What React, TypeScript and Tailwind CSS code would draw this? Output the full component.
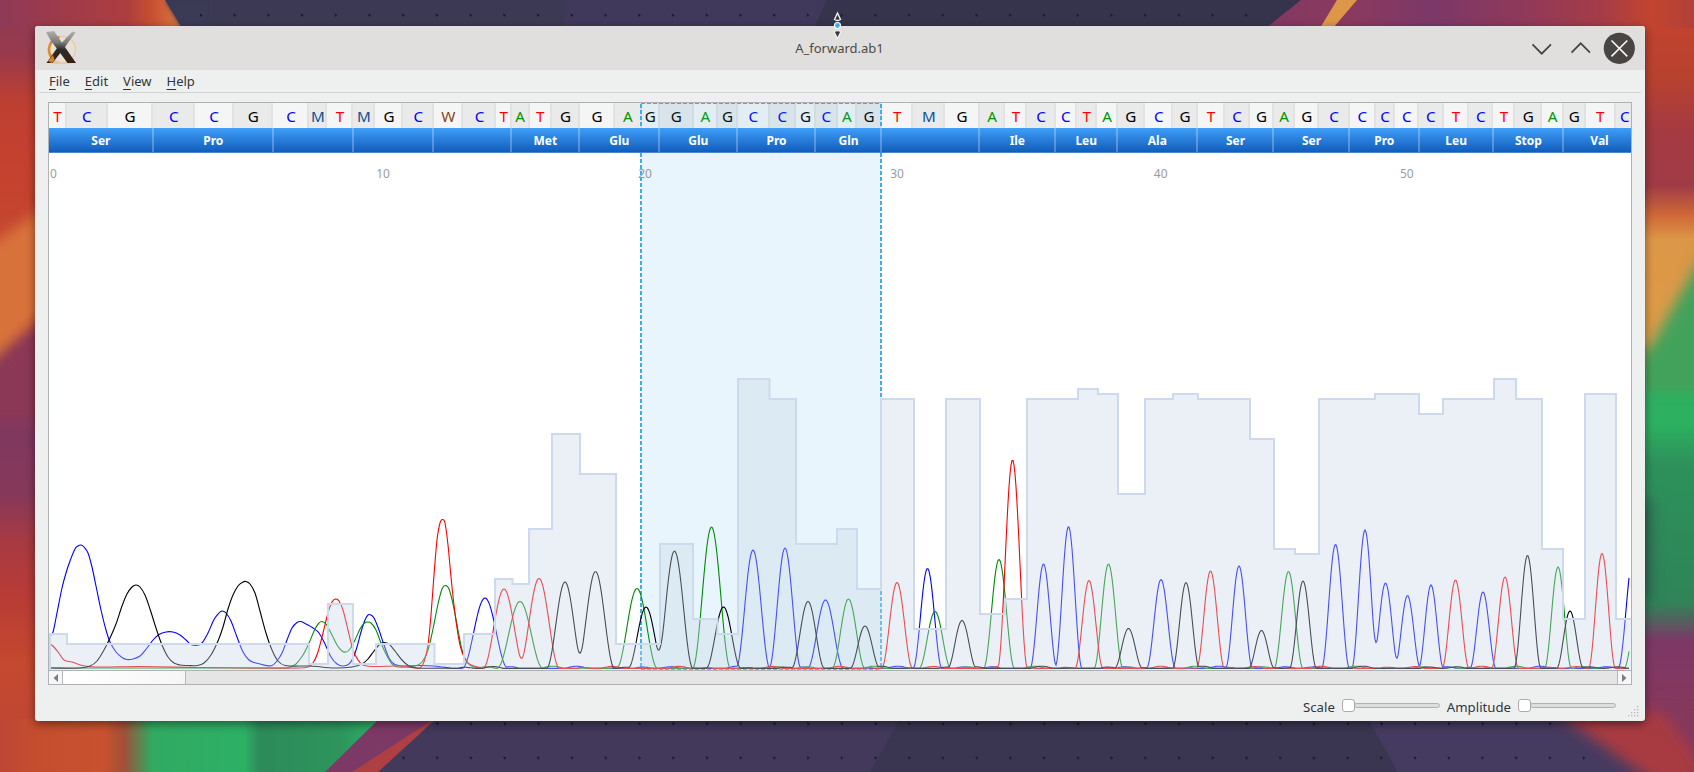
import React from "react";

const LEFT = 49;
const BASE_Y = 668.4;

const SEQ = "TCGCCGCMTMGCWCTATGGAGGAGCCGCAGTMGATCCTAGCGTCGAGCCCCCTCTGAGTC";

const EDGES = [
  49, 67, 107.6, 153.5, 195, 234, 273.5, 309.5, 327.5, 353.5, 375.5, 403.5, 434, 463.5, 496.5, 511.8, 529.6, 552,
  580, 615, 641.8, 659.6, 694, 718, 738, 769.6, 796, 816.2, 837.6, 857.3, 882, 913.6, 945.6, 979.8, 1005.6, 1027.6,
  1055.7, 1077, 1097.6, 1117.8, 1145.2, 1173.6, 1198, 1225.5, 1250, 1274.2, 1295.6, 1319.6, 1350, 1375.8, 1395.6,
  1419.5, 1443.8, 1469.6, 1493.7, 1515.6, 1542.6, 1564.2, 1586, 1616.2, 1635,
];

const BASE_COLOR: Record<string, string> = {
  T: "text-[#ff0000]",
  C: "text-[#0000ff]",
  G: "text-black",
  A: "text-[#009600]",
  M: "text-[#0b4f91]",
  W: "text-[#8b4513]",
};

const AMINO: [string, number][] = [
  ["Ser", 153.8], ["Pro", 273.8], ["", 353.8], ["", 434], ["", 511.8], ["Met", 580], ["Glu", 659.8], ["Glu", 738],
  ["Pro", 816.2], ["Gln", 882], ["", 980], ["Ile", 1055.8], ["Leu", 1117.8], ["Ala", 1198], ["Ser", 1274.2],
  ["Ser", 1350], ["Pro", 1419.8], ["Leu", 1493.8], ["Stop", 1564.2], ["Val", 1636],
];

// [right edge, top] of every step of the quality graph
const QUALITY: [number, number][] = [
  [67, 634], [309, 644], [328, 664], [353, 604], [376, 664], [434.5, 644], [464, 664], [495, 634], [512.5, 579],
  [529, 584], [552, 529], [580, 434], [616, 474], [660, 644], [693, 544], [717.5, 619], [738, 634], [769.5, 379],
  [796, 399], [837, 544], [857, 529], [881, 589], [914, 399], [946, 629], [980, 399], [1005, 614], [1027, 599],
  [1078, 399], [1098, 389], [1118, 394], [1145, 494], [1173, 399], [1198, 394], [1250, 399], [1274, 439],
  [1295, 549], [1319, 554], [1375, 399], [1419, 394], [1443, 414], [1494, 399], [1516, 379], [1542, 399],
  [1563, 549], [1585, 619], [1616, 394], [1640, 619],
];

const BLUE_HEAD: [number, number][] = [
  [50, 636], [53, 632], [56, 618], [62, 588], [66, 573], [70, 561], [75, 549], [78, 546], [81, 545], [84, 547],
  [88, 553], [92, 567], [96, 586], [101, 610], [106, 630], [110, 642], [116, 652], [122, 657.5], [127, 659.5],
  [133, 659], [140, 656], [147, 648], [153, 640], [159, 634.5], [166, 632], [173, 632], [180, 635], [186, 640],
  [191, 644.5], [196, 645.5], [202, 643], [208, 633], [214, 619.5], [219, 613], [222, 611], [226, 613], [231, 621],
  [237, 637], [243, 652], [249, 660], [254, 662.5], [260, 664], [266, 665.5], [272, 665.5], [277, 661], [282, 653],
  [287, 640], [292, 628], [297, 622.5], [301, 621.5], [306, 624], [313, 628], [319, 633], [325, 644], [331, 657],
  [337, 664], [343, 666], [349, 664], [353, 658], [357, 647], [361, 632], [365, 620], [368, 615], [371, 615],
  [374, 618], [379, 630], [384, 645], [389, 658], [394, 664], [402, 666], [420, 665.5], [434, 666], [450, 668],
];
const BLACK_HEAD: [number, number][] = [
  [50, 668], [80, 668], [90, 666], [97, 661], [104, 650], [110, 638], [116, 624], [122, 606], [127, 594], [132, 587],
  [136, 585], [140, 587], [145, 595], [150, 609], [156, 628], [162, 645], [168, 657], [174, 663], [180, 665],
  [188, 665.5], [197, 665.5], [204, 663], [211, 655], [218, 641], [223, 627], [228, 609], [233, 595], [238, 586],
  [243, 582], [246, 581.5], [250, 584], [255, 593], [260, 611], [266, 633], [272, 650], [278, 661], [285, 665.5],
  [310, 666], [335, 668], [352, 667], [362, 664], [368, 659], [374, 651], [380, 644], [384, 642.5], [389, 644],
  [395, 651], [402, 660], [409, 666], [418, 668], [450, 668],
];
const RED_HEAD: [number, number][] = [
  [50, 644], [53, 646], [58, 652], [64, 660], [72, 662], [82, 665.5], [95, 667], [140, 666.5], [200, 667.5],
  [250, 668], [300, 668], [308, 667], [313, 663], [318, 652], [323, 633], [328, 613], [332, 602], [335.5, 599],
  [339, 601], [343, 610], [348, 630], [353, 650], [358, 660], [363, 665], [372, 666.5], [400, 666], [415, 668],
  [420, 668], [424, 662], [428, 645], [431, 615], [434, 575], [437, 540], [440, 523], [442.5, 519.5], [445, 523],
  [448, 545], [451, 577], [454, 605], [457, 628], [460, 645], [464, 657], [468, 663], [474, 666], [480, 667.5],
];
const GREEN_HEAD: [number, number][] = [
  [50, 668], [200, 668], [285, 668], [290, 667], [296, 664], [303, 655], [309, 643], [315, 629], [319, 623],
  [322, 621.5], [326, 624], [332, 635], [337, 645], [342, 651], [346, 652], [350, 649], [355, 640], [360, 629],
  [364, 623.5], [367, 622], [371, 623], [376, 630], [381, 643], [387, 656], [392, 664], [398, 667], [415, 666],
  [422, 662], [428, 650], [433, 629], [438, 604], [442, 589], [445.5, 585.5], [449, 589], [453, 604], [458, 630],
  [462, 650], [467, 662], [473, 667], [480, 668],
];

// [centre, top, half width at the base]
type Peak = [number, number, number];

const BLUE_PEAKS: Peak[] = [
  [485, 598, 23], [753, 550, 17], [785, 548, 16], [825.5, 600, 18], [927.5, 568.5, 14.5], [1043.5, 564, 13.5],
  [1068.5, 526.5, 13.5], [1161, 579.5, 14.5], [1239, 566, 13.5], [1335.5, 544.5, 14], [1365, 530, 13.3],
  [1385.5, 583, 13.3], [1407.5, 595.5, 13], [1431, 585, 12.5], [1483, 592, 13], [1634, 552, 16],
];
const BLACK_PEAKS: Peak[] = [
  [565, 582, 18.5], [595.5, 571.5, 19], [646, 607, 18], [674.5, 551, 18.5], [723.5, 607, 17.5], [808, 601.5, 16.5],
  [865, 626, 15], [962, 620.5, 14.5], [1128.5, 628.5, 14], [1186, 582.5, 13.5], [1261.5, 630.5, 13], [1303, 581, 13.5],
  [1527.5, 555.5, 13.5], [1570, 611, 13.5],
];
const RED_PEAKS: Peak[] = [
  [504, 589, 21], [539, 578.5, 20.5], [897, 582.5, 15.5], [1012.5, 460, 15], [1089, 580.5, 14], [1210.5, 571, 14],
  [1455.5, 580, 13.5], [1505, 577, 13.5], [1602, 553.5, 13.5],
];
const GREEN_PEAKS: Peak[] = [
  [520, 601.5, 23], [637, 588.5, 20.5], [711.5, 527, 19], [848.5, 599, 16.5], [935, 611.5, 16], [999, 559.5, 15.5],
  [1108.5, 564, 14.5], [1288.5, 571.5, 14.5], [1558, 567, 13.5], [1638, 608, 14],
];

function tracePath(head: [number, number][], peaks: Peak[], phase: number) {
  let d = `M${head[0][0]} ${head[0][1]}`;
  for (let i = 0; i < head.length - 1; i++) {
    const p0 = head[Math.max(0, i - 1)];
    const p1 = head[i];
    const p2 = head[i + 1];
    const p3 = head[Math.min(head.length - 1, i + 2)];
    const slope = (a: number[], b: number[]) => (b[1] - a[1]) / (b[0] - a[0] || 1);
    const dx = (p2[0] - p1[0]) / 3;
    const y1 = p1[1] + slope(p0, p2) * dx;
    const y2 = p2[1] - slope(p1, p3) * dx;
    d += `C${p1[0] + dx} ${y1.toFixed(1)} ${p2[0] - dx} ${y2.toFixed(1)} ${p2[0]} ${p2[1]}`;
  }
  for (let x = head[head.length - 1][0] + 1; x <= 1629; x += 1) {
    let h = 0;
    for (const [c, top, w] of peaks) {
      const t = Math.abs(x - c) / w;
      if (t < 1) h += (BASE_Y - top) * Math.cos((t * Math.PI) / 2) ** 2;
    }
    const ripple = Math.max(0, Math.sin(x / 7.3 + phase) * Math.sin(x / 17.1 + phase * 2.3)) * 2.2;
    d += `L${x} ${(BASE_Y - Math.max(h, ripple)).toFixed(1)}`;
  }
  return d;
}

const TRACES = [
  { stroke: "#0000ff", d: tracePath(BLUE_HEAD, BLUE_PEAKS, 1.1) },
  { stroke: "#008a0a", d: tracePath(GREEN_HEAD, GREEN_PEAKS, 4.4) },
  { stroke: "#fa0000", d: tracePath(RED_HEAD, RED_PEAKS, 2.7) },
  { stroke: "#000000", d: tracePath(BLACK_HEAD, BLACK_PEAKS, 0.2) },
];

function qualityLine() {
  let d = "M50 672";
  let x = 50;
  for (const [right, top] of QUALITY) {
    d += `L${x} ${top}L${right} ${top}`;
    x = right;
  }
  return d + "L1640 672Z";
}

function Wallpaper() {
  const dots: [number, number][] = [];
  for (let i = 0; i < 32; i++) dots.push([201 + i * 33.72, 15]);
  for (let i = 0; i < 34; i++) dots.push([437.5 + i * 33.72, 723.5]);
  for (let i = 0; i < 36; i++) dots.push([403.6 + i * 33.72, 757.7]);
  return (
    <svg className="absolute inset-0" width="1694" height="772" viewBox="0 0 1694 772">
      <defs>
        <filter id="soft" x="-80" y="-80" width="1900" height="950" filterUnits="userSpaceOnUse"><feGaussianBlur stdDeviation="7" /></filter>
        <filter id="edge" x="-30%" y="-30%" width="160%" height="160%"><feGaussianBlur stdDeviation="2" /></filter>
        <linearGradient id="left" x1="0" y1="0" x2="0" y2="772" gradientUnits="userSpaceOnUse">
          <stop offset="0" stopColor="#8e3a55" /><stop offset="0.07" stopColor="#983a4c" />
          <stop offset="0.13" stopColor="#bd3f32" /><stop offset="0.2" stopColor="#c4412f" />
          <stop offset="0.38" stopColor="#c64a2f" /><stop offset="0.44" stopColor="#933a50" />
          <stop offset="0.56" stopColor="#80385f" /><stop offset="0.64" stopColor="#86385a" />
          <stop offset="0.7" stopColor="#a73a42" /><stop offset="0.77" stopColor="#b83b36" />
          <stop offset="0.86" stopColor="#c5482f" /><stop offset="1" stopColor="#bd4636" />
        </linearGradient>
        <linearGradient id="right" x1="1670" y1="0" x2="1670" y2="772" gradientUnits="userSpaceOnUse">
          <stop offset="0" stopColor="#c6422f" /><stop offset="0.1" stopColor="#b8422f" />
          <stop offset="0.17" stopColor="#a53a42" /><stop offset="0.24" stopColor="#a03b46" />
          <stop offset="0.28" stopColor="#cf6a38" /><stop offset="0.31" stopColor="#dc9647" />
          <stop offset="0.44" stopColor="#dd9c48" /><stop offset="0.48" stopColor="#5aa057" />
          <stop offset="0.51" stopColor="#2db060" /><stop offset="0.55" stopColor="#2db060" />
          <stop offset="0.6" stopColor="#2d915b" /><stop offset="0.78" stopColor="#2f8458" />
          <stop offset="0.83" stopColor="#7d3867" /><stop offset="0.9" stopColor="#84385f" />
          <stop offset="1" stopColor="#983a4e" />
        </linearGradient>
        <linearGradient id="top" x1="0" y1="0" x2="170" y2="0" gradientUnits="userSpaceOnUse">
          <stop offset="0" stopColor="#8f3a57" /><stop offset="0.3" stopColor="#9c3a4c" />
          <stop offset="0.75" stopColor="#ad3e40" /><stop offset="0.88" stopColor="#c54e30" />
          <stop offset="1" stopColor="#d2683a" />
        </linearGradient>
        <linearGradient id="topr" x1="1270" y1="0" x2="1694" y2="0" gradientUnits="userSpaceOnUse">
          <stop offset="0" stopColor="#833862" /><stop offset="0.2" stopColor="#8b3a5e" />
          <stop offset="0.38" stopColor="#7b3868" /><stop offset="0.6" stopColor="#90395a" />
          <stop offset="0.78" stopColor="#a53c48" /><stop offset="0.9" stopColor="#c3442f" />
          <stop offset="1" stopColor="#b04038" />
        </linearGradient>
        <linearGradient id="bottom" x1="0" y1="0" x2="400" y2="0" gradientUnits="userSpaceOnUse">
          <stop offset="0" stopColor="#bd4636" /><stop offset="0.1" stopColor="#c54e2f" />
          <stop offset="0.26" stopColor="#c8522f" /><stop offset="0.31" stopColor="#a05038" />
          <stop offset="0.38" stopColor="#31aa62" /><stop offset="0.61" stopColor="#2db065" />
          <stop offset="0.65" stopColor="#2d8a5a" /><stop offset="0.85" stopColor="#2d955c" />
          <stop offset="0.95" stopColor="#2fae66" />
        </linearGradient>
      </defs>
      <rect width="1694" height="772" fill="#3b3953" />
      <rect width="60" height="772" fill="url(#left)" />
      <path d="M-30 258L60 198V300L-30 385Z" fill="#d8723a" filter="url(#soft)" />
      <path d="M-30 390L60 308V420H-30Z" fill="#8b3956" filter="url(#soft)" />
      <path d="M0 0H165L182 28H0Z" fill="url(#top)" />
      <path d="M165 0L182 28H210V0Z" fill="#3b3a57" filter="url(#edge)" />
      <path d="M565 0H827L815 28H565Z" fill="#41395c" />
      <path d="M827 0H1301L1266 28H814Z" fill="#36344c" />
      <path d="M1301 0H1694V60H1226Z" fill="url(#topr)" />
      <path d="M1337 0H1357L1333 28H1320Z" fill="#de9748" />
      <rect x="1600" y="28" width="94" height="744" fill="url(#right)" />
      <path d="M1720 225V390H1640V365Z" fill="#42a25b" filter="url(#soft)" />
      <path d="M1635 500H1653V600H1635Z" fill="#2f6b54" filter="url(#soft)" />
      <rect y="719" width="470" height="53" fill="url(#bottom)" />
      <path d="M379 719H436L380 772H325Z" fill="#7d3966" />
      <path d="M434 719L352 772H384Z" fill="#ae3f42" />
      <path d="M436 719H1369L1398 772H378Z" fill="#42395b" />
      <path d="M900 719H1369L1398 772H870Z" fill="#3a3651" />
      <path d="M1368 719H1640L1694 772H1398Z" fill="#453b60" />
      <path d="M1555 712H1700V790H1665Z" fill="#a83b42" filter="url(#soft)" />
      <path d="M1655 700H1710V775Z" fill="#84385d" filter="url(#soft)" />
      {dots.map(([x, y], i) => (
        <path key={i} d={`M${x - 1.5} ${y - 1.5}l3 1.5l-2 2z`} fill="#1b1b26" />
      ))}
    </svg>
  );
}

function AppIcon() {
  return (
    <svg width="34" height="34" viewBox="0 0 34 34">
      <defs>
        <linearGradient id="steel" x1="0" y1="0" x2="0" y2="1">
          <stop offset="0" stopColor="#b0b0b0" /><stop offset="0.35" stopColor="#7c7c7c" />
          <stop offset="0.58" stopColor="#2b2a29" /><stop offset="1" stopColor="#38200f" />
        </linearGradient>
      </defs>
      <ellipse cx="18" cy="32" rx="14" ry="1.8" fill="#cfc6b4" />
      <circle cx="18.500" cy="19.500" r="13" fill="#e6e1d6" stroke="#efc9a8" strokeWidth="1.600" />
      <path d="M15.500 7A13 13 0 0 0 8 28" fill="none" stroke="#e08a30" strokeWidth="2.600" />
      <path d="M28.500 1.500L31.500 2.500L19.500 19L8.500 33H2.500L14.500 16Z" fill="url(#steel)" />
      <path d="M2 2L10 1L19.500 15L32 33H23.500L14 20L7 11Z" fill="url(#steel)" />
      <path d="M4 31L9 25L10.500 30L8 33Z" fill="#d9822b" />
    </svg>
  );
}

function TitleBar() {
  return (
    <div className="flex h-[44px] shrink-0 items-center justify-between rounded-t-[3px] bg-[#e0dfdd] pr-[10px] pl-[9px]">
      <div className="flex w-[120px] pb-[2px]">
        <AppIcon />
      </div>
      <div className="pt-px text-[13px] text-[#4d4a48]">A_forward.ab1</div>
      <div className="flex w-[120px] items-center justify-end">
        <svg width="116" height="34" viewBox="1519 30 116 34" fill="none">
          <path d="M1532.500 43.300L1541.700 52.700L1551 43.300M1571.500 51.700L1580.700 42.300L1590 51.700" stroke="#474340" strokeWidth="1.700" />
          <circle cx="1619.300" cy="47.300" r="15.600" fill="#494542" />
          <path d="M1611.500 39.500L1627.300 55.300M1627.300 39.500L1611.500 55.300" stroke="#f4f3f2" strokeWidth="1.700" />
        </svg>
      </div>
    </div>
  );
}

function MenuBar() {
  const items = ["File", "Edit", "View", "Help"];
  return (
    <div className="mx-[4px] flex h-[23px] shrink-0 items-center gap-[15px] border-b border-[#d0d2d3] pt-[2px] pl-[10px] text-[13px] text-[#31363b]">
      {items.map((item) => (
        <span key={item}>
          <span className="underline underline-offset-[3px]">{item[0]}</span>
          {item.slice(1)}
        </span>
      ))}
    </div>
  );
}

function BaseRow() {
  return (
    <div className="relative flex h-[25px] w-[1582px] overflow-hidden">
      {SEQ.split("").map((base, i) => (
        <div
          key={i}
          className={`flex shrink-0 items-center justify-center border-r-2 border-[#e2e2e2] pt-[3px] pl-px text-[15.2px] leading-none ${BASE_COLOR[base]} ${i % 2 ? "bg-[#eaeaea]" : "bg-[#f5f5f5]"}`}
          style={{ width: EDGES[i + 1] - EDGES[i] }}
        >
          {base}
        </div>
      ))}
      <svg className="absolute top-0 left-[591px]" width="243" height="25">
        <rect x="1" width="240" height="25" fill="#3daee9" fillOpacity="0.1" />
        <path d="M1 0.500H241" stroke="#3daee9" strokeDasharray="4 2" />
        <path d="M1 1V25M241 1V25" stroke="#3daee9" strokeWidth="2" strokeDasharray="4 2" />
      </svg>
    </div>
  );
}

function AminoRow() {
  return (
    <div className="flex h-[25px] w-[1582px] overflow-hidden">
      {AMINO.map(([name, right], i) => (
        <div
          key={i}
          className="flex shrink-0 items-center justify-center border-r-2 border-b border-white/25 bg-linear-to-b from-[#3f9ff8] to-[#0f5ab8] bg-origin-border pt-px pl-px text-[12px] leading-none font-bold text-white"
          style={{ width: right - (i ? AMINO[i - 1][1] : LEFT) }}
        >
          {name}
        </div>
      ))}
    </div>
  );
}

function Chromatogram() {
  const ruler: [string, number][] = [["0", 53.5], ["10", 383], ["20", 645], ["30", 897], ["40", 1160.7], ["50", 1406.8]];
  return (
    <svg className="block" width="1582" height="517" viewBox="49 153 1582 517">
      <rect x="49" y="153" width="1582" height="517" fill="#fff" />
      <g fontSize="12" fill="#9b9c9d" textAnchor="middle">
        {ruler.map(([label, x]) => (
          <text key={label} x={x} y="178">{label}</text>
        ))}
      </g>
      <rect x="641" y="153" width="240" height="516" fill="#3aa8e0" fillOpacity="0.11" />
      <path d="M641 153V669M881 153V669" stroke="#3daee9" strokeWidth="2" strokeDasharray="4 2" />
      <path d="M641 669.500H881" stroke="#3daee9" strokeDasharray="4 2" />
      <path d="M49.500 637V669" stroke="#a0306a" />
      <path d="M49.500 637V644" stroke="#0000ee" />
      {TRACES.map((t) => (
        <path key={t.stroke} d={t.d} fill="none" stroke={t.stroke} strokeWidth="1.100" />
      ))}
      <path d={qualityLine()} fill="#c5d5e6" fillOpacity="0.37" />
      <path d={qualityLine()} fill="none" stroke="#cdd9ec" strokeWidth="2" />
    </svg>
  );
}

function ScrollBar() {
  return (
    <div className="flex h-[14px] border-t border-[#aeb2b4] bg-[#e4e5e4]">
      <div className="flex w-[14px] items-center justify-center border-r border-[#b4b8b9] bg-[#f6f6f6]">
        <svg width="5" height="8"><path d="M5 0V8L0.500 4Z" fill="#7b7d80" /></svg>
      </div>
      <div className="w-[123px] border-r border-[#b4b8b9] bg-linear-to-r from-white to-[#f6f6f6]" />
      <div className="flex-1" />
      <div className="flex w-[14px] items-center justify-center border-l border-[#b4b8b9] bg-[#f6f6f6]">
        <svg width="5" height="8"><path d="M0 0V8L4.500 4Z" fill="#7b7d80" /></svg>
      </div>
    </div>
  );
}

function Slider({ label }: { label: string }) {
  return (
    <div className="flex items-center">
      <span className="mr-[7px] pt-[3px] text-[13.2px] leading-none">{label}</span>
      <span className="z-10 h-[13px] w-[13px] rounded-[3px] border border-[#a9adaf] bg-white" />
      <span className="-ml-px h-[5px] w-[86px] rounded-[3px] border border-[#aeb2b3] bg-[#dcdddc]" />
    </div>
  );
}

function Footer() {
  return (
    <div className="flex flex-1 justify-end pr-[4px] text-[#31363b]">
      <div className="flex h-[42px] items-center gap-[7px]">
        <Slider label="Scale" />
        <Slider label="Amplitude" />
      </div>
      <svg className="mt-[21px] ml-[12px]" width="13" height="13" fill="#b5b8ba">
        {[0, 1, 2, 3].map((r) =>
          [0, 1, 2, 3].filter((c) => c >= 3 - r).map((c) => (
            <rect key={`${r}-${c}`} x={c * 3} y={r * 3} width="1.300" height="1.300" />
          )),
        )}
      </svg>
    </div>
  );
}

function ResizeCursor() {
  return (
    <svg className="absolute top-[10px] left-[831px]" width="13" height="30" viewBox="831 10 13 30">
      <path d="M837.500 13L840.500 19.500Q837.500 21.500 834.500 19.500Z" fill="#333" stroke="#fff" strokeWidth="1.300" />
      <circle cx="837.500" cy="25.500" r="3" fill="#3daee9" stroke="#fff" strokeWidth="1.200" />
      <path d="M837.500 38.500L834 31.500Q837.500 30 841 31.500Z" fill="#3a3a3a" stroke="#f4f4f4" strokeWidth="1.200" />
    </svg>
  );
}

export default function App() {
  return (
    <div className="relative h-[772px] w-[1694px] overflow-hidden pt-[26px] pl-[35px] font-['Noto_Sans',sans-serif]">
      <Wallpaper />
      <div className="relative flex h-[695px] w-[1610px] flex-col rounded-[3px] bg-[#eef0f0] shadow-[0_3px_10px_rgba(0,0,0,0.45)]">
        <TitleBar />
        <MenuBar />
        <div className="mx-[13px] mt-[9px] w-[1584px] shrink-0 border border-[#aeb2b4]">
          <BaseRow />
          <AminoRow />
          <Chromatogram />
          <ScrollBar />
        </div>
        <Footer />
      </div>
      <ResizeCursor />
    </div>
  );
}
